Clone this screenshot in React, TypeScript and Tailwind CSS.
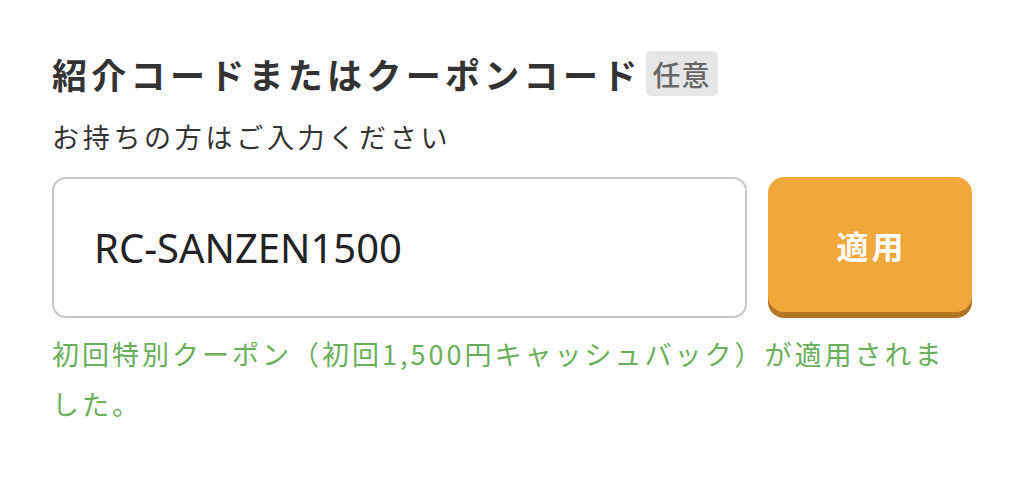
import React from "react";

export default function App() {
  const jp = { fontFamily: '"Noto Sans CJK JP", "Noto Sans", sans-serif' };
  return (
    <div className="w-[1024px] h-[482px] bg-white" style={jp}>
      <div className="pl-[52px] pr-[52px] pt-[51px]">
        <div className="flex items-center h-[45px]">
          <h2 className="text-[35px] leading-none font-bold text-[#333333] tracking-[4.3px]">
            紹介コードまたはクーポンコード
          </h2>
          <span className="ml-[4px] flex items-center justify-center w-[72px] h-[45px] rounded-[5px] bg-[#e6e6e6] text-[28px] font-medium text-[#666666] tracking-[1px]">
            任意
          </span>
        </div>
        <p className="mt-[26px] text-[27px] leading-[30px] text-[#333333] tracking-[3.7px]">
          お持ちの方はご入力ください
        </p>
        <div className="mt-[25px] flex items-start gap-[21px]">
          <div className="w-[696px] h-[141px] rounded-[14px] border-2 border-[#c8c8c8] bg-white flex items-center pl-[40px]">
            <span
              className="text-[40px] text-[#222222]"
              style={{ fontFamily: '"Noto Sans", "Open Sans", sans-serif' }}
            >
              RC-SANZEN1500
            </span>
          </div>
          <button className="w-[204px] h-[135px] rounded-[16px] bg-[#f0a73c] shadow-[0_6px_0_#b37424] flex items-center justify-center">
            <span className="text-[32px] font-bold text-white tracking-[3px] pl-[3px]">適用</span>
          </button>
        </div>
        <p className="mt-[11px] text-[27px] leading-[50px] text-[#6ab05b] tracking-[3px]">
          初回特別クーポン（初回1,500円キャッシュバック）が適用されました。
        </p>
      </div>
    </div>
  );
}
